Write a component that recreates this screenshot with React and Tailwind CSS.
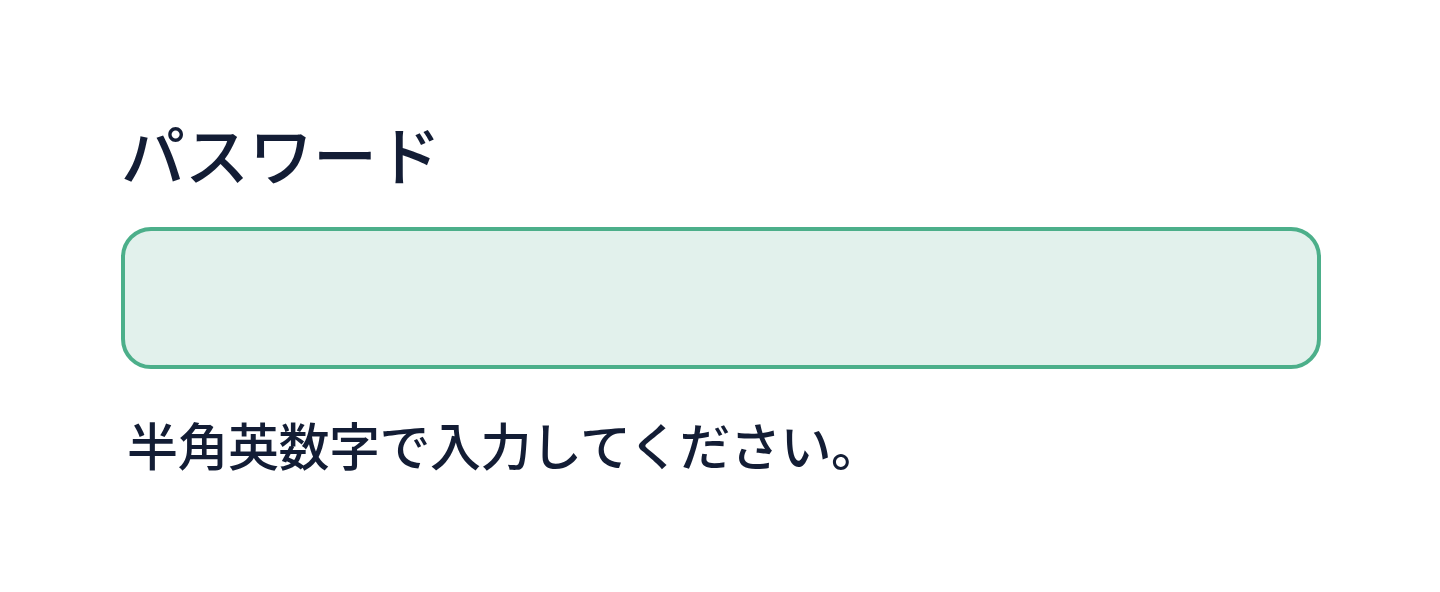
import React from "react";

export default function App() {
  return (
    <div
      className="w-[1440px] h-[592px] bg-white px-[121px] pt-[104px]"
      style={{ fontFamily: '"Noto Sans CJK JP", "Noto Sans", sans-serif' }}
    >
      <label className="block text-[64px] leading-[96px] font-medium text-[#131d35]">
        パスワード
      </label>
      <input
        type="password"
        className="mt-[27px] block w-[1200px] h-[142px] rounded-[30px] border-4 border-[#4caf8a] bg-[#e2f1ec] outline-none"
      />
      <p className="mt-[37px] pl-[6px] text-[51px] leading-[76px] tracking-[-0.5px] font-medium text-[#131d35]">
        半角英数字で入力してください。
      </p>
    </div>
  );
}
